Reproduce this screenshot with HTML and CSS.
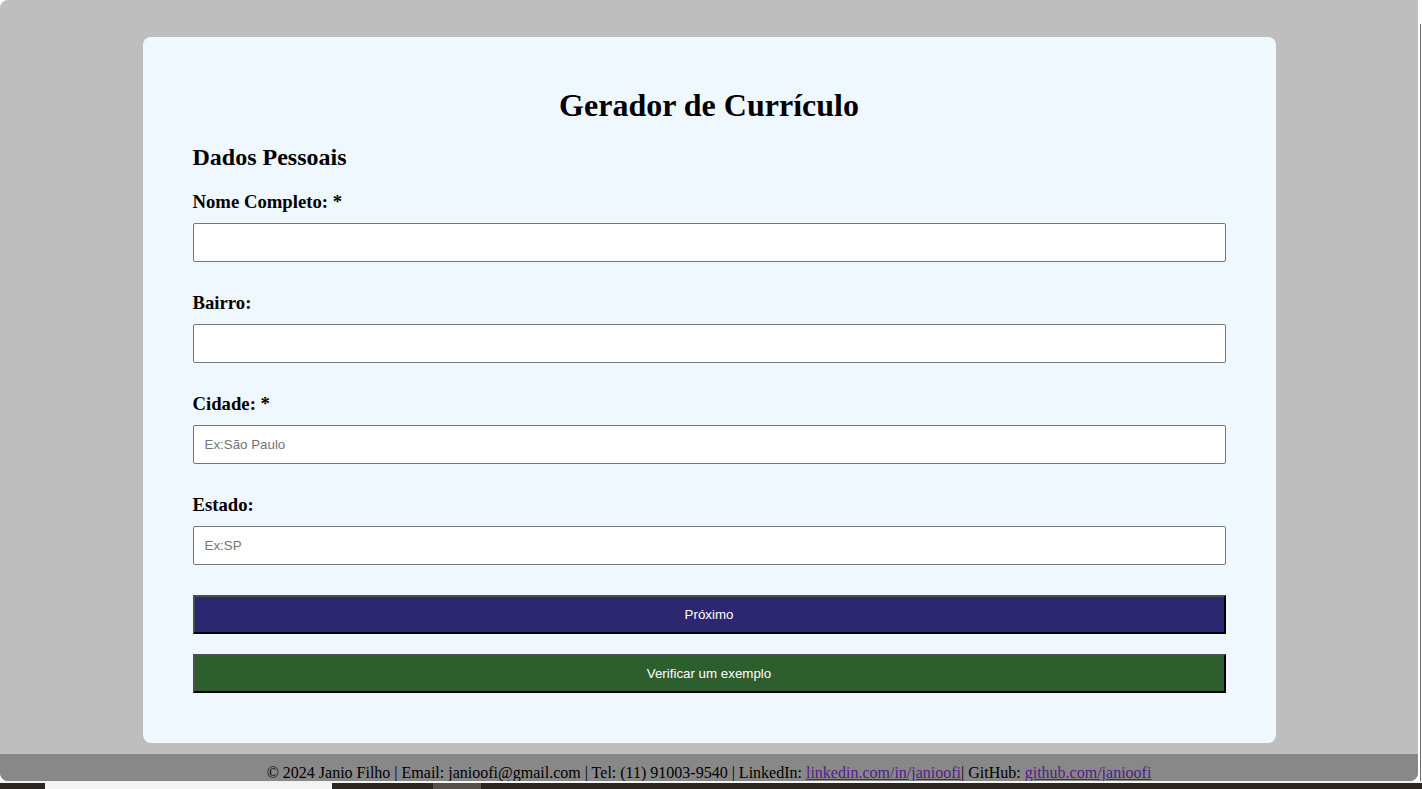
FILE: index.html
```html
<!DOCTYPE html>
<html lang="pt-BR">
<head>
<meta charset="utf-8">
<title>Gerador de Currículo</title>
<link rel="stylesheet" href="styles.css">
</head>
<body>
<div class="screen">
  <div class="window">
    <main class="main">
      <div class="card">
        <h1 class="title">Gerador de Currículo</h1>
        <h2 class="section">Dados Pessoais</h2>
        <form class="form">
          <div class="field">
            <label class="label" for="nome">Nome Completo: *</label>
            <input class="input" id="nome" type="text">
          </div>
          <div class="field">
            <label class="label" for="bairro">Bairro:</label>
            <input class="input" id="bairro" type="text">
          </div>
          <div class="field">
            <label class="label" for="cidade">Cidade: *</label>
            <input class="input" id="cidade" type="text" placeholder="Ex:São Paulo">
          </div>
          <div class="field field-last">
            <label class="label" for="estado">Estado:</label>
            <input class="input" id="estado" type="text" placeholder="Ex:SP">
          </div>
          <button class="btn btn-next" type="button">Próximo</button>
          <button class="btn btn-example" type="button">Verificar um exemplo</button>
        </form>
      </div>
    </main>
    <footer class="footer">© 2024 Janio Filho | Email: janioofi@gmail.com | Tel: (11) 91003-9540 | LinkedIn: <a class="link" href="#">linkedin.com/in/janioofi</a>| GitHub: <a class="link" href="#">github.com/janioofi</a></footer>
  </div>
  <div class="edge"><div class="edge-line"></div></div>
  <div class="taskbar">
    <div class="tb tb-dark1"></div>
    <div class="tb tb-light"></div>
    <div class="tb tb-dark2"></div>
    <div class="tb tb-gray"></div>
    <div class="tb tb-rest"></div>
  </div>
</div>
</body>
</html>
```

FILE: styles.css
```css
* { box-sizing: border-box; }
html, body { margin: 0; padding: 0; }
body {
  width: 1422px;
  height: 789px;
  overflow: hidden;
  background: #ffffff;
  font-family: "Liberation Serif", "Times New Roman", serif;
}
.screen {
  display: grid;
  grid-template-columns: 1418px 4px;
  grid-template-rows: 781px 8px;
  width: 1422px;
  height: 789px;
}
.window {
  display: flex;
  flex-direction: column;
  background: #bebebe;
  border-radius: 8px 0 8px 8px;
  overflow: hidden;
}
.main {
  flex: 1;
  padding-top: 37px;
}
.card {
  width: 1133px;
  margin: 0 auto;
  background: #eff7ff;
  border-radius: 8px;
  padding: 50px 50px 50px;
}
.title {
  margin: 0 0 19px;
  font-size: 32px;
  line-height: 37px;
  font-weight: bold;
  text-align: center;
  color: #000;
}
.section {
  margin: 0 0 18px;
  font-size: 24px;
  line-height: 28px;
  font-weight: bold;
  color: #000;
}
.form {
  display: flex;
  flex-direction: column;
}
.field {
  display: flex;
  flex-direction: column;
  margin-bottom: 28px;
}
.field-last { margin-bottom: 30px; }
.label {
  font-size: 18.72px;
  line-height: 26px;
  font-weight: bold;
  margin-bottom: 8px;
  color: #000;
}
.input {
  width: 100%;
  height: 39px;
  border: 1px solid #767676;
  border-radius: 2px;
  background: #fff;
  padding: 0 11px;
  font-family: "Liberation Sans", Arial, sans-serif;
  font-size: 13.33px;
  color: #000;
}
.input::placeholder { color: #757575; }
.btn {
  width: 100%;
  height: 39px;
  border-width: 2px;
  border-style: solid;
  border-color: #4e4e4e #000 #000 #4e4e4e;
  color: #fff;
  font-family: "Liberation Sans", Arial, sans-serif;
  font-size: 13.33px;
  padding: 0;
}
.btn-next { background: #2d2670; margin-bottom: 20px; }
.btn-example { background: #2d5e2d; }
.footer {
  height: 27px;
  margin-top: 11px;
  background: #888888;
  padding-top: 10px;
  text-align: center;
  font-size: 16px;
  line-height: 18px;
  color: #000;
  white-space: nowrap;
  overflow: hidden;
}
.link { color: #551a8b; }
.edge {
  background: #ffffff;
  display: flex;
  justify-content: flex-end;
  padding: 24px 1px 0 0;
}
.edge-line {
  width: 1px;
  background: #6e6e6e;
}
.taskbar {
  grid-column: 1 / 3;
  display: flex;
  border-top: 2px solid #f2f2f2;
  background: #2b2621;
}
.tb { height: 100%; }
.tb-dark1 { width: 45px; background: #2b2621; }
.tb-light { width: 287px; background: #f3f3f3; }
.tb-dark2 { width: 101px; background: #2b2621; }
.tb-gray { width: 48px; background: #55504b; }
.tb-rest { flex: 1; background: #2b2621; }
```
